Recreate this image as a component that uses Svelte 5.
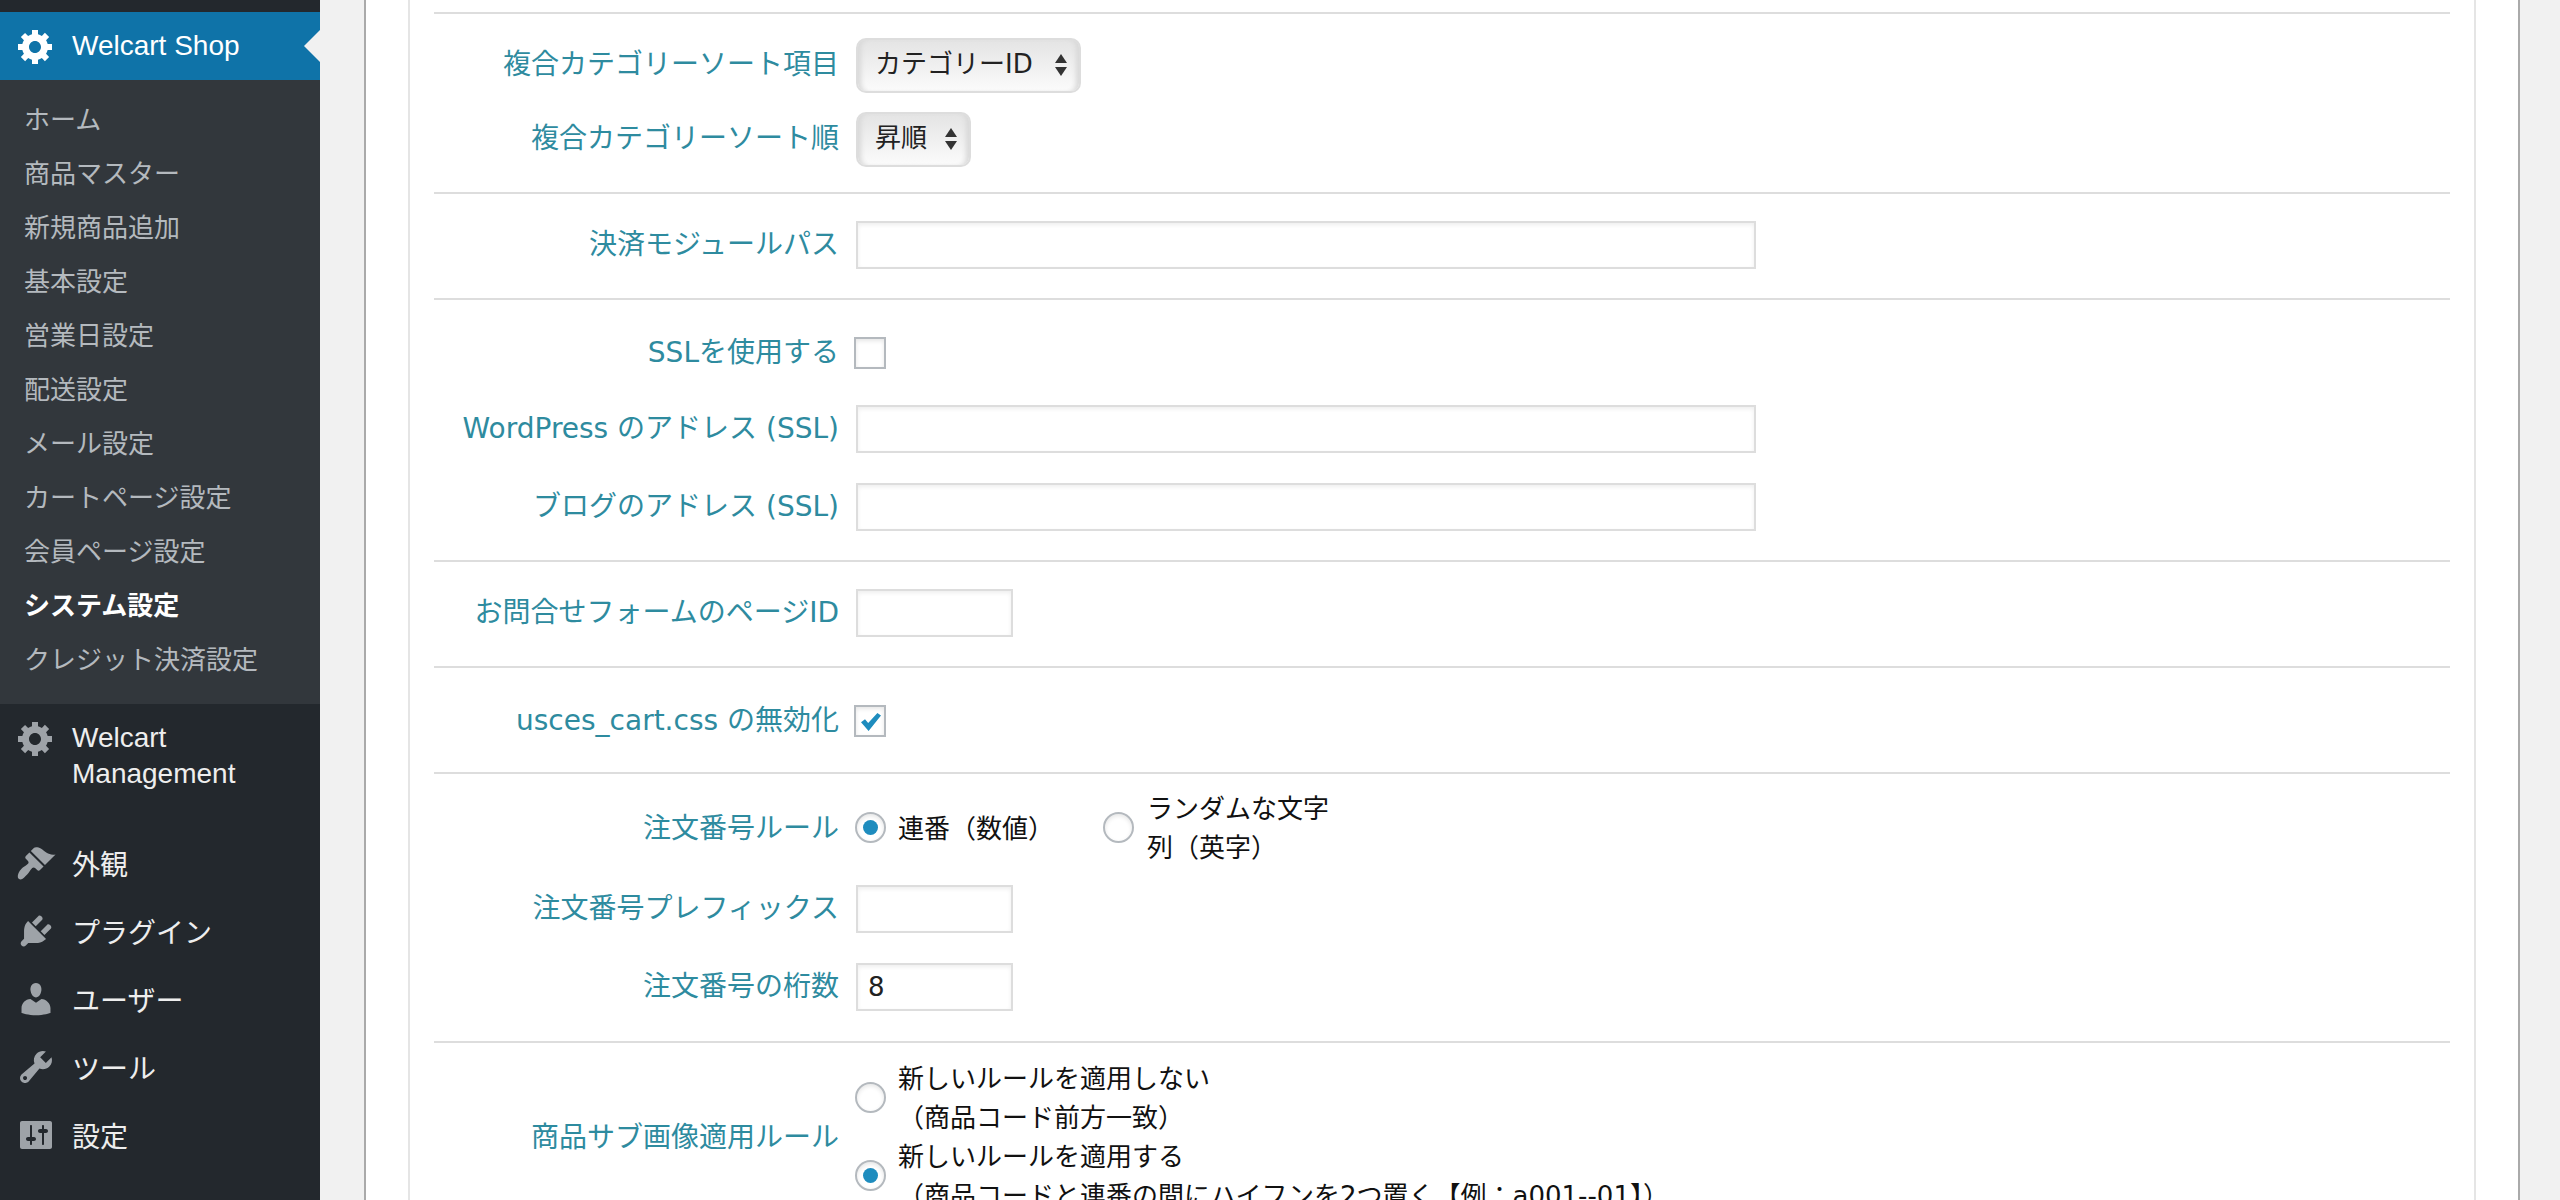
<script>
  const subs = ['ホーム','商品マスター','新規商品追加','基本設定','営業日設定','配送設定','メール設定','カートページ設定','会員ページ設定','システム設定','クレジット決済設定'];
  const gear = 'M18 12h-2.18c-.17.7-.44 1.35-.81 1.93l1.54 1.54-2.1 2.1-1.54-1.54c-.58.36-1.23.63-1.91.79V19H8v-2.18c-.68-.16-1.33-.43-1.91-.79l-1.54 1.54-2.12-2.12 1.54-1.54c-.36-.58-.63-1.23-.79-1.91H1V9.03h2.17c.16-.7.44-1.35.8-1.94L2.43 5.55l2.1-2.1 1.54 1.54c.58-.37 1.24-.64 1.93-.81V2h3v2.18c.68.16 1.33.43 1.91.79l1.54-1.54 2.12 2.12-1.54 1.54c.36.59.64 1.24.8 1.94H18V12zm-8.5 1.5c1.66 0 3-1.34 3-3s-1.34-3-3-3-3 1.34-3 3 1.34 3 3 3z';
  const menus = [
    { label: '外観', d: 'M14.48 11.06L7.41 3.99l1.5-1.5c.5-.56 2.3-.47 3.51.32 1.21.8 1.43 1.28 2.91 2.1 1.18.64 2.45 1.26 4.45.85zm-.71.71L6.7 4.7 4.93 6.47c-.39.39-.39 1.02 0 1.41l1.06 1.06c.39.39.39 1.03 0 1.42-.6.6-1.43 1.11-2.21 1.69-.35.26-.7.53-1.01.84C1.43 14.23.8 15.8.9 17c.06.7.7 1.2 1.4 1.2 1.1-.1 2.3-1.5 3.28-2.5.31-.31.58-.66.84-1.01.58-.78 1.09-1.61 1.69-2.21.39-.39 1.03-.39 1.42 0l1.06 1.06c.39.39 1.02.39 1.41 0z' },
    { label: 'プラグイン', d: 'M13.11 4.36L9.87 7.6 8 5.73l3.24-3.24c.35-.34 1.05-.2 1.56.32.52.51.66 1.21.31 1.55zm-8 1.77l.91-1.12 9.01 9.01-1.19.84c-.71.71-2.63 1.16-3.82 1.16H6.14L4.9 17.26c-.59.59-1.54.59-2.12 0-.59-.58-.59-1.53 0-2.12l1.24-1.24v-3.88c0-1.13.4-3.19 1.09-3.89zm7.26 3.97l3.24-3.24c.34-.35 1.04-.21 1.55.31.52.51.66 1.21.31 1.55l-3.24 3.25z' },
    { label: 'ユーザー', d: 'M10 9.25c-2.27 0-2.73-3.44-2.73-3.44C7 4.02 7.82 2 9.97 2c2.16 0 2.98 2.02 2.71 3.81 0 0-.41 3.44-2.68 3.44zm0 2.57L12.72 10c2.39 0 4.52 2.33 4.52 4.53v2.49s-3.65 1.13-7.24 1.13c-3.65 0-7.24-1.13-7.24-1.13v-2.49c0-2.25 1.94-4.48 4.47-4.48z' },
    { label: 'ツール', d: 'M16.68 9.77c-1.34 1.34-3.3 1.67-4.95.99l-5.41 6.52c-.99.99-2.59.99-3.58 0s-.99-2.59 0-3.57l6.52-5.42c-.68-1.65-.35-3.61.99-4.95 1.28-1.28 3.12-1.62 4.72-1.06l-2.89 2.89 2.82 2.82 2.86-2.87c.53 1.58.18 3.39-1.08 4.67zM3.81 16.21c.4.39 1.04.39 1.43 0 .4-.4.4-1.04 0-1.43-.39-.4-1.03-.4-1.43 0-.39.39-.39 1.03 0 1.43z' },
    { label: '設定', d: 'M18 16V4c0-.55-.45-1-1-1H3c-.55 0-1 .45-1 1v12c0 .55.45 1 1 1h14c.55 0 1-.45 1-1zM8 11h1c.55 0 1 .45 1 1s-.45 1-1 1H8v1.5c0 .28-.22.5-.5.5s-.5-.22-.5-.5V13H6c-.55 0-1-.45-1-1s.45-1 1-1h1V5.5c0-.28.22-.5.5-.5s.5.22.5.5V11zm5-2h-1c-.55 0-1-.45-1-1s.45-1 1-1h1V5.5c0-.28.22-.5.5-.5s.5.22.5.5V7h1c.55 0 1 .45 1 1s-.45 1-1 1h-1v5.5c0 .28-.22.5-.5.5s-.5-.22-.5-.5V9z' }
  ];
</script>

<div class="page">
  <aside class="side">
    <div class="current">
      <svg class="ico" viewBox="0 0 20 20"><path d={gear} /></svg>
      <span>Welcart Shop</span>
    </div>
    <ul class="subs">
      {#each subs as s}
        <li class:on={s === 'システム設定'}>{s}</li>
      {/each}
    </ul>
    <div class="mgmt">
      <svg class="ico" viewBox="0 0 20 20"><path d={gear} /></svg>
      <span>Welcart<br />Management</span>
    </div>
    {#each menus as m}
      <div class="item">
        <svg class="ico" viewBox="0 0 20 20"><path d={m.d} /></svg>
        <span>{m.label}</span>
      </div>
    {/each}
  </aside>

  <main class="main">
    <div class="outer">
      <div class="inner">
        <section class="sec s-sort">
          <div class="row h74">
            <div class="lab">複合カテゴリーソート項目</div>
            <div class="sel w225">
              <select><option>カテゴリーID</option></select>
              <span class="arrows"></span>
            </div>
          </div>
          <div class="row h74">
            <div class="lab">複合カテゴリーソート順</div>
            <div class="sel w115">
              <select><option>昇順</option></select>
              <span class="arrows"></span>
            </div>
          </div>
        </section>

        <section class="sec s-path">
          <div class="row h48">
            <div class="lab">決済モジュールパス</div>
            <input class="txt long" type="text" />
          </div>
        </section>

        <section class="sec s-ssl">
          <div class="row h76">
            <div class="lab">SSLを使用する</div>
            <input class="chk" type="checkbox" />
          </div>
          <div class="row h78">
            <div class="lab">WordPress のアドレス (SSL)</div>
            <input class="txt long" type="text" />
          </div>
          <div class="row h78">
            <div class="lab">ブログのアドレス (SSL)</div>
            <input class="txt long" type="text" />
          </div>
        </section>

        <section class="sec s-form">
          <div class="row h48">
            <div class="lab">お問合せフォームのページID</div>
            <input class="txt short" type="text" />
          </div>
        </section>

        <section class="sec s-css">
          <div class="row h32">
            <div class="lab">usces_cart.css の無効化</div>
            <input class="chk" type="checkbox" checked />
          </div>
        </section>

        <section class="sec s-order">
          <div class="row h74 opts">
            <div class="lab">注文番号ルール</div>
            <label class="opt first"><input class="rad" type="radio" name="o" checked /><span>連番（数値）</span></label>
            <label class="opt second"><input class="rad" type="radio" name="o" /><span>ランダムな文字列（英字）</span></label>
          </div>
          <div class="row h78">
            <div class="lab">注文番号プレフィックス</div>
            <input class="txt short" type="text" />
          </div>
          <div class="row h78">
            <div class="lab">注文番号の桁数</div>
            <input class="txt short" type="text" value="8" />
          </div>
        </section>

        <section class="sec s-sub">
          <div class="row top">
            <div class="lab">商品サブ画像適用ルール</div>
            <div class="stack">
              <label class="opt"><input class="rad" type="radio" name="p" /><span>新しいルールを適用しない<br />（商品コード前方一致）</span></label>
              <label class="opt"><input class="rad" type="radio" name="p" checked /><span>新しいルールを適用する<br />（商品コードと連番の間にハイフンを2つ置く【例：a001--01】）</span></label>
            </div>
          </div>
        </section>
      </div>
    </div>
  </main>
</div>

<style>
  :global(body) { margin: 0; background: #f1f1f1; }
  .page { display: flex; height: 1200px; overflow: hidden; font-family: "Liberation Sans", "Noto Sans CJK JP", sans-serif; }

  .side { width: 320px; flex: none; background: #23282d; padding-top: 12px; box-sizing: border-box; color: #eee; font-size: 28px; }
  .ico { width: 40px; height: 40px; flex: none; fill: #9ea3a8; }
  .current { position: relative; height: 68px; display: flex; align-items: center; gap: 16px; padding-left: 16px; background: #0f73a8; color: #fff; }
  .current .ico { fill: #fff; }
  .current::after { content: ""; position: absolute; right: 0; top: 18px; border: 16px solid transparent; border-left-width: 0; border-right-color: #f1f1f1; }
  .subs { list-style: none; margin: 0; padding: 13px 0 17px; background: #32373c; font-size: 26px; color: #b4b9be; }
  .subs li { height: 54px; line-height: 54px; padding-left: 24px; }
  .subs li.on { color: #fff; font-weight: 700; }
  .mgmt { display: flex; gap: 16px; padding: 16px 0 37px 16px; line-height: 36px; }
  .mgmt .ico { margin-top: -2px; }
  .item { height: 68px; display: flex; align-items: center; gap: 16px; padding-left: 16px; }

  .main { flex: 1; padding: 0 40px 0 44px; min-width: 0; }
  .outer { height: 100%; box-sizing: border-box; background: #fff; border: solid #aaa; border-width: 0 2px; padding: 0 42px; }
  .inner { height: 100%; box-sizing: border-box; border: solid #e5e5e5; border-width: 0 2px; padding: 12px 24px 0; }

  .sec { border-top: 2px solid #ddd; font-family: "DejaVu Sans", "Noto Sans CJK JP", sans-serif; }
  .s-sort { padding: 14px 0 16px; }
  .s-path { padding: 27px 0 29px; }
  .s-ssl { padding: 37px 0 29px; }
  .s-ssl .h76 { height: 32px; }
  .s-ssl .h78 { height: 48px; margin-top: 30px; }
  .s-ssl .h76 + .h78 { margin-top: 36px; }
  .s-form { padding: 27px 0 29px; }
  .s-css { padding: 37px 0 35px; }
  .s-order { padding: 17px 0 30px; }
  .s-order .h74 { height: 76px; }
  .s-order .h78 { height: 48px; margin-top: 30px; }
  .s-order .h74 + .h78 { margin-top: 18px; }
  .s-sub { padding: 17px 0 0; }

  .row { display: flex; align-items: center; }
  .row.top { align-items: center; }
  .h74 { height: 74px; }
  .h48 { height: 48px; }
  .h32 { height: 32px; }

  .lab { width: 405px; flex: none; margin-right: 17px; text-align: right; font-size: 28px; line-height: 38px; color: #2e8b9f; white-space: nowrap; }

  .sel { position: relative; height: 55px; }
  .w225 { width: 225px; }
  .w115 { width: 115px; }
  .sel select { appearance: none; width: 100%; height: 100%; box-sizing: border-box; margin: 0; padding: 0 0 2px 17px; font: 26px "DejaVu Sans", "Noto Sans CJK JP", sans-serif; color: #222; border: 2px solid #ddd; border-radius: 10px; background: linear-gradient(#e4e4e4, #fbfbfb); box-shadow: inset 6px 0 5px -3px #d8d8d8, inset -6px 0 5px -3px #d8d8d8; }
  .arrows { position: absolute; right: 14px; top: 16px; width: 0; height: 0; border: 6px solid transparent; border-top-width: 0; border-bottom: 9px solid #333; }
  .arrows::after { content: ""; position: absolute; left: -6px; top: 13px; border: 6px solid transparent; border-bottom-width: 0; border-top: 9px solid #333; }

  .txt { display: block; height: 48px; box-sizing: border-box; margin: 0; padding: 0 10px; font: 26px "DejaVu Sans", sans-serif; color: #222; background: #fff; border: 2px solid #ddd; box-shadow: inset 0 2px 4px rgba(0,0,0,.07); outline: 0; }
  .long { width: 900px; }
  .short { width: 157px; }

  .chk { appearance: none; position: relative; width: 32px; height: 32px; margin: 0 0 0 -2px; box-sizing: border-box; background: #fff; border: 2px solid #b4b9be; box-shadow: inset 0 2px 4px rgba(0,0,0,.1); }
  .chk:checked::before { content: ""; position: absolute; left: 5px; top: 6px; width: 20px; height: 18px; background: #1e8cbe; clip-path: polygon(0 52%, 20% 35%, 36% 56%, 82% 0, 100% 14%, 38% 100%); }

  .rad { appearance: none; position: relative; flex: none; width: 31px; height: 31px; margin: 0 12px 4px -1px; box-sizing: border-box; background: #fff; border: 2px solid #b4b9be; border-radius: 50%; box-shadow: inset 0 2px 4px rgba(0,0,0,.1); }
  .rad:checked::before { content: ""; position: absolute; left: 6px; top: 6px; width: 15px; height: 15px; border-radius: 50%; background: #1e8cbe; }

  .opt { display: flex; align-items: center; font-size: 26px; line-height: 39px; color: #111; }
  .opts { align-items: center; }
  .first { width: 248px; flex: none; }
  .second { width: 250px; flex: none; }
  .second .rad { margin-right: 13px; }
  .second span { width: 186px; }
  .stack { display: flex; flex-direction: column; }
  .stack .opt { white-space: nowrap; }
</style>
